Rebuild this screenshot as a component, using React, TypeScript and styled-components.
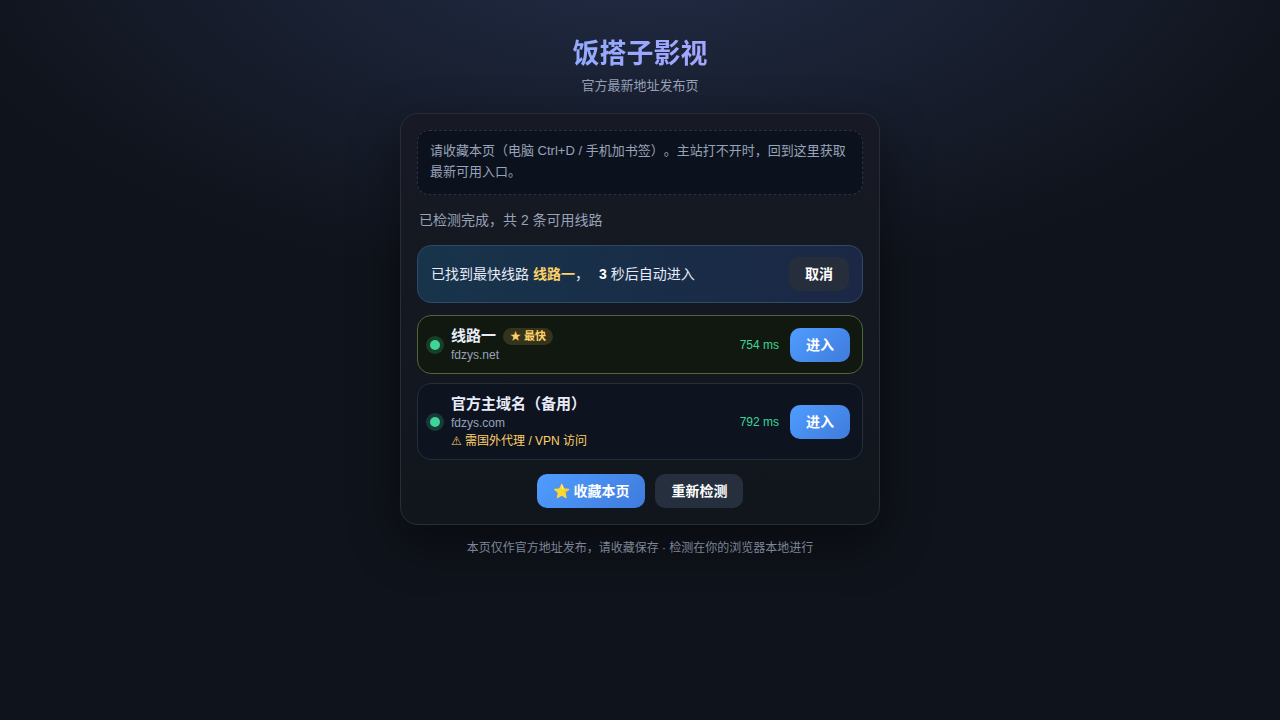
import React from "react";
import styled, { createGlobalStyle, css } from "styled-components";

const GlobalStyle = createGlobalStyle`
  * { box-sizing: border-box; }
  body {
    margin: 0;
    min-height: 100vh;
    color: #e8ecf8;
    font-family: "Liberation Sans", "DejaVu Sans", "Noto Sans CJK SC", sans-serif;
    text-spacing-trim: space-all;
    background: radial-gradient(1200px 600px at 50% -10%, #232d48 0%, #0f131b 60%) no-repeat #0f131b;
  }
`;

const Page = styled.div`
  display: flex;
  flex-direction: column;
  align-items: center;
  padding: 32px 16px;
`;

const Header = styled.header`
  display: flex;
  flex-direction: column;
  align-items: center;
  width: 100%;
  max-width: 480px;
  margin-bottom: 18px;
`;

const Title = styled.h1`
  width: 100%;
  margin: 0;
  text-align: center;
  font-size: 27px;
  line-height: 44px;
  font-weight: 700;
  color: transparent;
  background: linear-gradient(90deg, #7ab0ff, #bda0ff);
  background-clip: text;
  -webkit-background-clip: text;
`;

const Subtitle = styled.p`
  margin: 0;
  font-size: 13px;
  line-height: 19px;
  color: #98a2b8;
`;

const Card = styled.main`
  width: 100%;
  max-width: 480px;
  padding: 16px;
  border: 1px solid #282d38;
  border-radius: 18px;
  background: linear-gradient(180deg, #171a24, #11161d);
  box-shadow: 0 18px 50px rgba(0, 0, 0, 0.45);
`;

const Notice = styled.p`
  margin: 0;
  padding: 9px 12px 12px;
  border: 1px dashed #2a313f;
  border-radius: 12px;
  background: #0c121d;
  color: #98a2b8;
  font-size: 13px;
  line-height: 21px;
`;

const Status = styled.p`
  margin: 16px 2px;
  font-size: 14px;
  line-height: 18px;
  color: #98a2b8;
`;

const panel = css`
  display: flex;
  align-items: center;
  border: 1px solid;
  border-radius: 14px;
`;

const Banner = styled.section`
  ${panel}
  justify-content: space-between;
  margin-bottom: 12px;
  padding: 11px 13px;
  border-color: #2b4b68;
  background: linear-gradient(90deg, #17344b, #1b2745);
  font-size: 14px;
`;

const BannerText = styled.span`
  padding-bottom: 3px;
`;

const Fastest = styled.b`
  color: #ffd166;
`;

const Countdown = styled.b`
  display: inline-block;
  min-width: 14px;
  text-align: right;
  color: #ffffff;
`;

const Button = styled.button<{ $primary?: boolean }>`
  height: 34px;
  padding: 0 16px 3px;
  border: 0;
  border-radius: 10px;
  background: ${(p) => (p.$primary ? "linear-gradient(135deg, #4f9dff, #3f7bdc)" : "#262f3d")};
  color: #ffffff;
  font-family: inherit;
  font-size: 14px;
  font-weight: 700;
  white-space: nowrap;
  cursor: pointer;
`;

const CancelButton = styled(Button)`
  background: #262e3b;
`;

const Routes = styled.ul`
  display: flex;
  flex-direction: column;
  gap: 9px;
  margin: 0;
  padding: 0;
  list-style: none;
`;

const Route = styled.li<{ $best?: boolean }>`
  ${panel}
  gap: 11px;
  padding: 10px 12px 9px;
  border-color: ${(p) => (p.$best ? "#4f6638" : "#252c3b")};
  background: ${(p) => (p.$best ? "#11180f" : "#0e1320")};
`;

const Dot = styled.span`
  width: 10px;
  height: 10px;
  border-radius: 50%;
  background: #3dd598;
  box-shadow: 0 0 0 4px rgba(61, 213, 152, 0.2);
`;

const Info = styled.div`
  flex: 1;
  min-width: 0;
`;

const Name = styled.div`
  display: flex;
  align-items: center;
  gap: 7px;
  font-size: 15px;
  line-height: 20px;
  font-weight: 700;
`;

const Badge = styled.span`
  padding: 0 7px;
  border-radius: 999px;
  background: #35331b;
  color: #ffd166;
  font-family: "Liberation Sans", "Noto Sans CJK SC", sans-serif;
  font-size: 11px;
  line-height: 17px;
`;

const Domain = styled.div`
  font-size: 12px;
  line-height: 18px;
  color: #98a2b8;
`;

const Warning = styled.div`
  font-size: 12px;
  line-height: 18px;
  color: #ffd166;
`;

const Latency = styled.span`
  font-size: 12px;
  color: #3dd598;
`;

const Actions = styled.div`
  display: flex;
  justify-content: center;
  gap: 10px;
  margin-top: 14px;
`;

const Footer = styled.footer`
  margin-top: 14px;
  font-size: 12px;
  line-height: 18px;
  color: #7d8597;
`;

const routes = [
  { name: "线路一", domain: "fdzys.net", ms: 754, best: true, warning: "" },
  { name: "官方主域名（备用）", domain: "fdzys.com", ms: 792, best: false, warning: "⚠ 需国外代理 / VPN 访问" },
];

export default function App() {
  return (
    <Page>
      <GlobalStyle />
      <Header>
        <Title>饭搭子影视</Title>
        <Subtitle>官方最新地址发布页</Subtitle>
      </Header>
      <Card>
        <Notice>请收藏本页（电脑 Ctrl+D / 手机加书签）。主站打不开时，回到这里获取最新可用入口。</Notice>
        <Status>已检测完成，共 2 条可用线路</Status>
        <Banner>
          <BannerText>
            已找到最快线路 <Fastest>线路一</Fastest>， <Countdown>3</Countdown> 秒后自动进入
          </BannerText>
          <CancelButton type="button">取消</CancelButton>
        </Banner>
        <Routes>
          {routes.map((r) => (
            <Route key={r.domain} $best={r.best}>
              <Dot />
              <Info>
                <Name>
                  {r.name}
                  {r.best && <Badge>★ 最快</Badge>}
                </Name>
                <Domain>{r.domain}</Domain>
                {r.warning && <Warning>{r.warning}</Warning>}
              </Info>
              <Latency>{r.ms} ms</Latency>
              <Button type="button" $primary>进入</Button>
            </Route>
          ))}
        </Routes>
        <Actions>
          <Button type="button" $primary>⭐ 收藏本页</Button>
          <Button type="button">重新检测</Button>
        </Actions>
      </Card>
      <Footer>本页仅作官方地址发布，请收藏保存 · 检测在你的浏览器本地进行</Footer>
    </Page>
  );
}
